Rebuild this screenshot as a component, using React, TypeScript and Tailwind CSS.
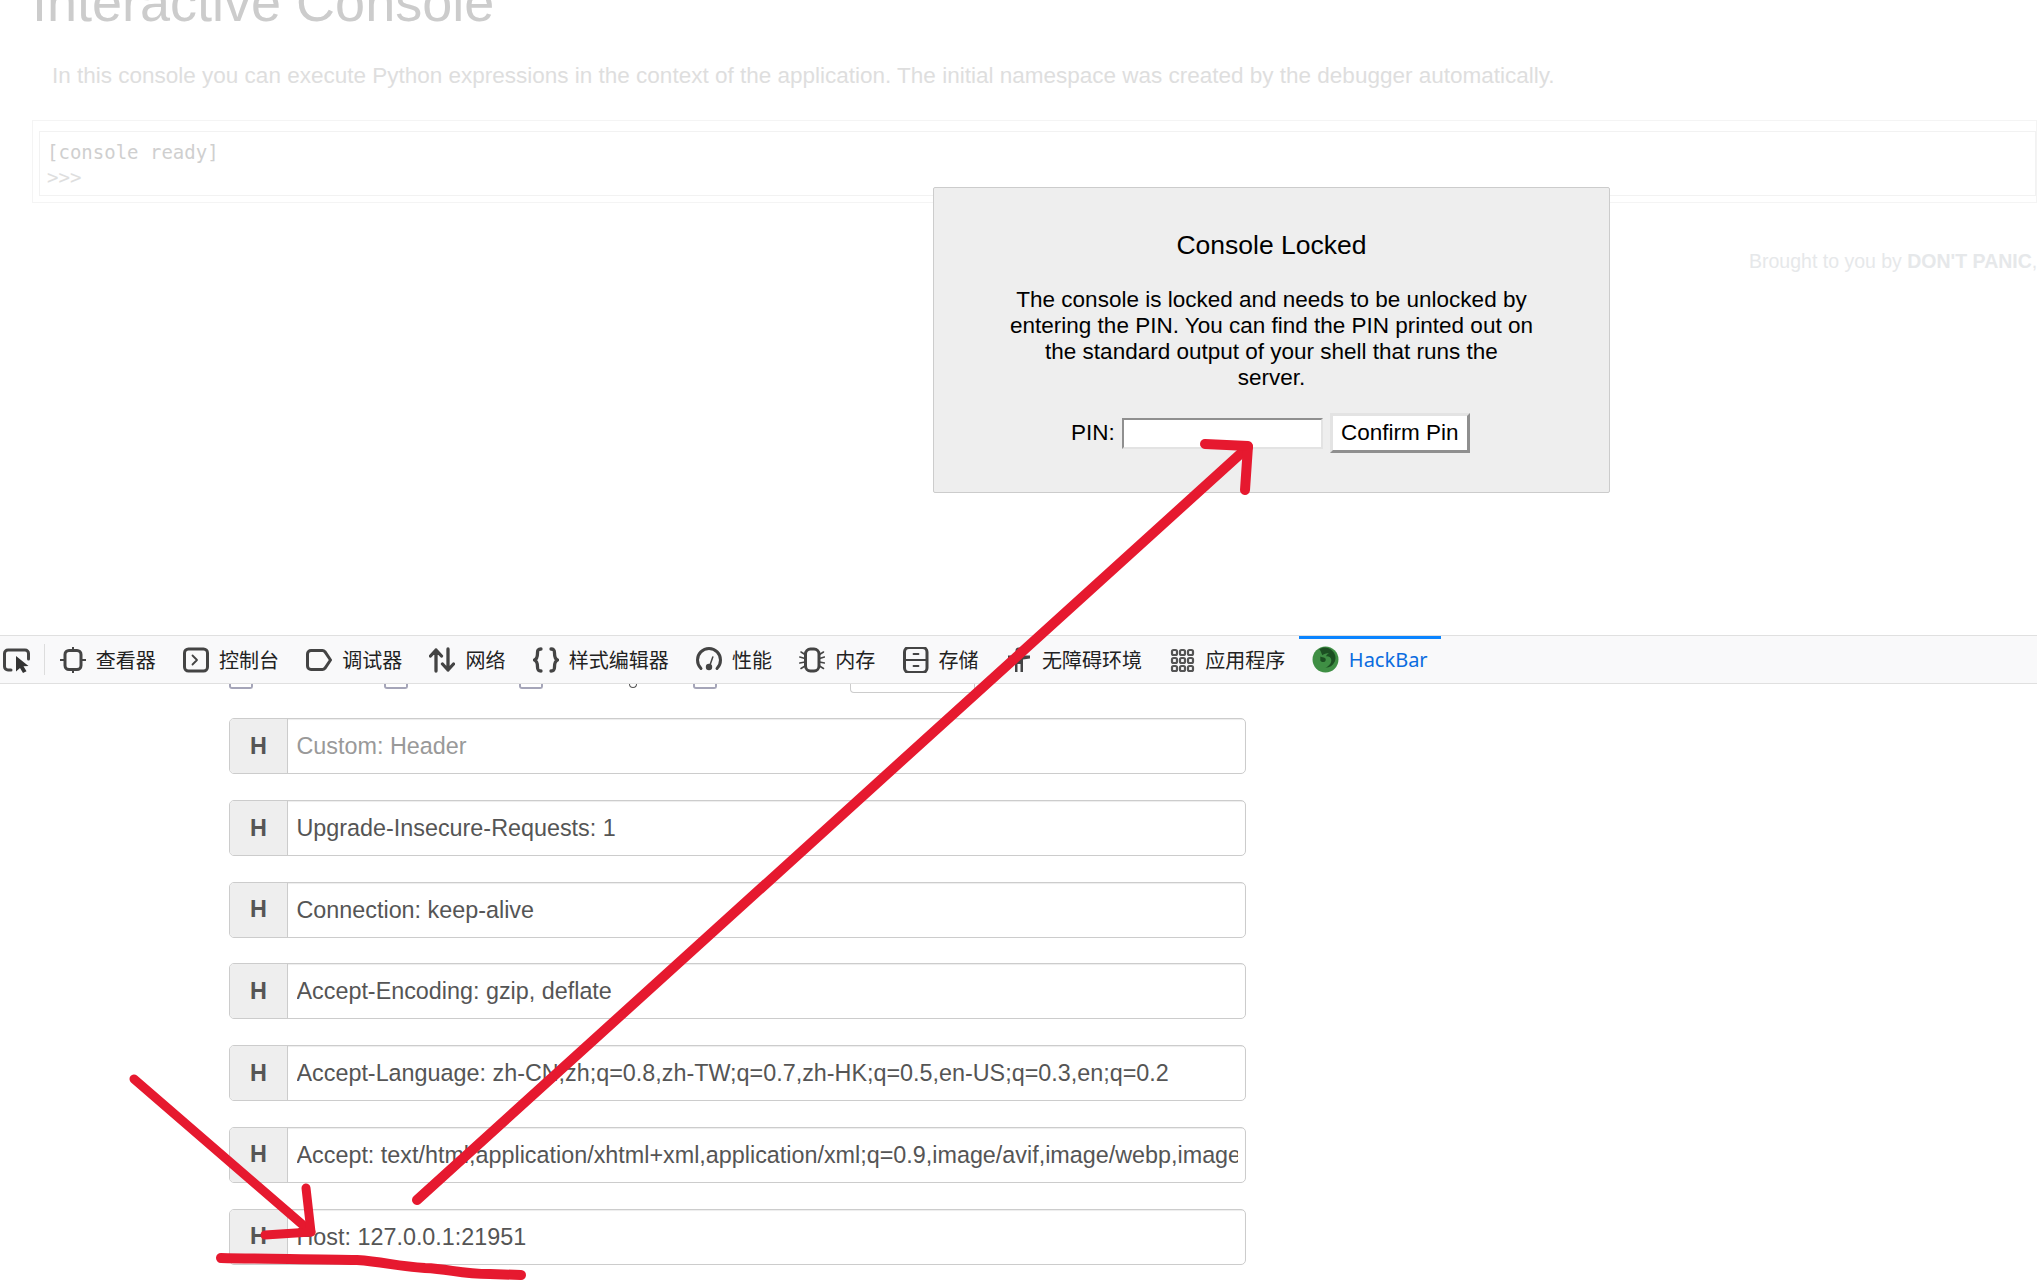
import type { ReactNode } from 'react';

const sans = 'font-["Liberation_Sans",Arial,sans-serif]';

const IconBox = ({ children }: { children: ReactNode }) => (
  <svg viewBox="0 0 26 26" width="26" height="26" fill="none" stroke="#444" strokeWidth="3" strokeLinecap="round" strokeLinejoin="round" className="shrink-0">
    {children}
  </svg>
);

const tabs: { label: string; icon: ReactNode }[] = [
  {
    label: '查看器',
    icon: (
      <IconBox>
        <rect x="5" y="3.500" width="16" height="19" rx="4" />
        <path d="M13 0.500v3M13 22.500v3M0.500 13H5M21 13h4.500" strokeWidth="2" />
      </IconBox>
    ),
  },
  {
    label: '控制台',
    icon: (
      <IconBox>
        <rect x="1.500" y="2" width="23" height="22" rx="4" />
        <path d="M9.500 8.500l4.500 4.500-4.500 4.500" strokeWidth="1.800" />
      </IconBox>
    ),
  },
  {
    label: '调试器',
    icon: (
      <IconBox>
        <path d="M5 3.500h11.500c1 0 1.800.5 2.400 1.200L24.500 13l-5.600 8.300c-.6.7-1.400 1.200-2.400 1.200H5c-2 0-3.500-1.500-3.500-3.500V7c0-2 1.500-3.500 3.500-3.500z" />
      </IconBox>
    ),
  },
  {
    label: '网络',
    icon: (
      <IconBox>
        <path d="M7 24V3M1.500 9L7 3l5.500 6M19 2v21M13.500 17l5.500 6 5.500-6" strokeWidth="3.300" />
      </IconBox>
    ),
  },
  {
    label: '样式编辑器',
    icon: (
      <IconBox>
        <path d="M8 2c-3 0-3.500 1.500-3.500 4 0 4-.5 6-3 7 2.500 1 3 3 3 7 0 2.500.5 4 3.500 4M18 2c3 0 3.500 1.500 3.500 4 0 4 .5 6 3 7-2.500 1-3 3-3 7 0 2.500-.5 4-3.500 4" strokeWidth="3.300" />
      </IconBox>
    ),
  },
  {
    label: '性能',
    icon: (
      <IconBox>
        <path d="M5 21.500C2.800 19.300 1.500 16.300 1.500 13 1.500 6.600 6.600 1.500 13 1.500S24.500 6.600 24.500 13c0 3.300-1.300 6.300-3.500 8.500" />
        <path d="M13.500 19.500L16.800 10" strokeWidth="1.500" />
        <circle cx="13" cy="20" r="3.200" fill="#444" stroke="none" />
      </IconBox>
    ),
  },
  {
    label: '内存',
    icon: (
      <IconBox>
        <rect x="6.500" y="2" width="13.500" height="22" rx="5" />
        <path d="M6 7.500L2 5M6 11.500L0.800 10M6 15L0.800 16M6 19L2 21.500M20.500 7.500L24.500 5M20.500 11.500L25.500 10M20.500 15L25.500 16M20.500 19L24.500 21.500" strokeWidth="1.500" />
      </IconBox>
    ),
  },
  {
    label: '存储',
    icon: (
      <IconBox>
        <rect x="1.500" y="0.500" width="22.500" height="25" rx="4.500" />
        <path d="M2 13h22M10.500 7h5M10.500 19h5" strokeWidth="1.800" />
      </IconBox>
    ),
  },
  {
    label: '无障碍环境',
    icon: (
      <svg viewBox="0 0 26 26" width="26" height="26" fill="#444" className="shrink-0">
        <circle cx="13" cy="4" r="3.500" />
        <path d="M2 8.500h22v3l-7 1V25h-2.500v-8h-3v8H9V12.500l-7-1z" />
      </svg>
    ),
  },
  {
    label: '应用程序',
    icon: (
      <svg viewBox="0 0 26 26" width="26" height="26" fill="none" stroke="#555" strokeWidth="2.200" className="shrink-0">
        <rect x="3" y="3" width="5" height="5" rx="1.500" />
        <rect x="11" y="3" width="5" height="5" rx="1.500" />
        <rect x="19" y="3" width="5" height="5" rx="1.500" />
        <rect x="3" y="11" width="5" height="5" rx="1.500" />
        <rect x="11" y="11" width="5" height="5" rx="1.500" />
        <rect x="19" y="11" width="5" height="5" rx="1.500" />
        <rect x="3" y="19" width="5" height="5" rx="1.500" />
        <rect x="11" y="19" width="5" height="5" rx="1.500" />
        <rect x="19" y="19" width="5" height="5" rx="1.500" />
      </svg>
    ),
  },
];

const headers = [
  { text: 'Custom: Header', placeholder: true },
  { text: 'Upgrade-Insecure-Requests: 1' },
  { text: 'Connection: keep-alive' },
  { text: 'Accept-Encoding: gzip, deflate' },
  { text: 'Accept-Language: zh-CN,zh;q=0.8,zh-TW;q=0.7,zh-HK;q=0.5,en-US;q=0.3,en;q=0.2' },
  { text: 'Accept: text/html,application/xhtml+xml,application/xml;q=0.9,image/avif,image/webp,image/apng,*/*;q=0.8' },
  { text: 'Host: 127.0.0.1:21951' },
];

const HeaderRow = ({ text, placeholder }: { text: string; placeholder?: boolean }) => (
  <div className="flex h-[56px] w-[1017px] overflow-hidden rounded-[5px] border border-[#ccc]">
    <div className="flex w-[58px] shrink-0 items-center justify-center border-r border-[#ccc] bg-[#eee] text-[23.400px] font-bold text-[#555]">H</div>
    <div className={`flex-1 overflow-hidden whitespace-nowrap pl-[8.500px] pr-[7px] text-[23.350px] leading-[55px] shadow-[inset_0_1px_1px_rgba(0,0,0,0.075)] ${placeholder ? 'text-[#999]' : 'text-[#555]'}`}>
      <div className="overflow-hidden">{text}</div>
    </div>
  </div>
);

const Checkbox = () => <div className="h-[5px] w-[24px] rounded-b-[3px] border-x-2 border-b-2 border-[#a5a5b8]" />;

export default function App() {
  return (
    <div className={`relative h-[1282px] w-full overflow-hidden bg-white ${sans}`}>
      {/* Debugger page, dimmed behind the pin prompt */}
      <div className="h-[635px] overflow-hidden">
        <h1 className="mt-[-31px] ml-[32px] text-[54px] leading-[66px] text-[#ccc]">Interactive Console</h1>
        <p className="mt-[26px] ml-[52px] whitespace-nowrap text-[22.500px] leading-[30px] text-[#dedede]">
          In this console you can execute Python expressions in the context of the application. The initial namespace was created by the debugger automatically.
        </p>
        <div className="mt-[29px] ml-[32px] h-[83px] border border-[#f4f4f4] pt-[10px] pl-[6px]">
          <div className="h-[65px] border border-[#f2f2f2] pt-[8px] pl-[7px] font-['DejaVu_Sans_Mono',monospace] text-[19px] leading-[25px] text-[#cfcfcf]">
            <div>[console ready]</div>
            <div className="text-[#dedede]">&gt;&gt;&gt;</div>
          </div>
        </div>
        <p className="mt-[45px] ml-[1749px] whitespace-nowrap text-[19.500px] leading-[26px] text-[#e6e8ea]">
          Brought to you by <b>DON'T PANIC</b>, your friendly Werkzeug powered traceback interpreter.
        </p>
      </div>

      {/* Devtools toolbar */}
      <div className="flex h-[49px] items-stretch border-y border-[#e0e0e0] bg-[#f9f9fa] font-['Noto_Sans_CJK_SC','Noto_Sans',sans-serif] text-[20px] text-[#222]">
        <div className="flex w-[44px] items-center pl-[3px]">
          <svg viewBox="0 0 28 26" width="28" height="26" fill="none" stroke="#444" strokeWidth="3" strokeLinecap="round" strokeLinejoin="round">
            <path d="M8 23H5c-2 0-3.500-1.500-3.500-3.500v-13C1.500 4.500 3 3 5 3h17c2 0 3.500 1.500 3.500 3.500V12" />
            <path d="M13 9l0 15.500 4-3.500 3 5 3.500-1.700-3-5 5-.3z" fill="#333" stroke="none" />
          </svg>
        </div>
        <div className="my-[8px] w-px bg-[#ddd]" />
        <div className="ml-[1px] flex">
          {tabs.map((tab) => (
            <div key={tab.label} className="flex items-center gap-[10px] px-[13.650px]">
              {tab.icon}
              <span>{tab.label}</span>
            </div>
          ))}
          <div className="relative flex items-center gap-[10px] px-[13px] text-[#0a6ce0]">
            <div className="absolute inset-x-0 top-0 h-[3px] bg-[#0a84ff]" />
            <svg viewBox="0 0 26 26" width="27" height="27" className="shrink-0">
              <circle cx="13" cy="13" r="12.500" fill="#3f8f44" />
              <path d="M7 3c4-2.500 9-2 12 1 3.500 3 4.500 7 3 11-2 4-5 6-9 6 4-2 6-5 5.500-8-.5-2.500-3-3.500-5-3 .5-1.500 1.500-2.500 3-3-3-.5-5 .5-6.500 2-1-2-1.500-4-3-6z" fill="#1c4f22" />
              <path d="M8 10c1.500 1 3 .5 4.500 1.500 1 1 1 2.500 0 3.500-1.500 1-3.500.5-4.500-1z" fill="#1c4f22" />
            </svg>
            <span className="font-['Noto_Sans',sans-serif]">HackBar</span>
          </div>
        </div>
      </div>

      {/* HackBar panel */}
      <div className="h-[598px] overflow-hidden">
        <div className="flex h-[9px] items-start pl-[229px]">
          <Checkbox />
          <div className="ml-[131px]"><Checkbox /></div>
          <div className="ml-[111px]"><Checkbox /></div>
          <div className="ml-[86px] h-[4px] w-[8px] rounded-b-full border-x border-b border-[#555]" />
          <div className="ml-[56px]"><Checkbox /></div>
          <div className="ml-[133px] h-[9px] w-[125px] rounded-b-[4px] border-x border-b border-[#ccc]" />
        </div>
        <div className="mt-[25.400px] ml-[229px] flex flex-col gap-[25.700px]">
          {headers.map((h) => (
            <HeaderRow key={h.text} text={h.text} placeholder={h.placeholder} />
          ))}
        </div>
      </div>

      {/* Pin prompt */}
      <div className="absolute top-[187px] left-[933px] h-[306px] w-[677px] rounded-[2px] border border-[#ccc] bg-[#eee] px-[70px] pt-[43px] text-center text-[22.500px] leading-[26px] text-black">
        <div className="text-[26.500px] leading-[28px]">Console Locked</div>
        <p className="mt-[28px]">
          The console is locked and needs to be unlocked by entering the PIN. You can find the PIN printed out on the standard output of your shell that runs the
          <br />
          server.
        </p>
        <div className="mt-[22px] ml-[67px] flex items-center">
          <span>PIN:</span>
          <div className="ml-[7px] h-[31px] w-[201px] border-2 border-t-[#8f8f8f] border-r-[#e3e3e3] border-b-[#e3e3e3] border-l-[#8f8f8f] bg-white" />
          <div className="ml-[7px] flex h-[40px] w-[140px] items-center justify-center border-[3px] border-t-[#e3e3e3] border-r-[#8f8f8f] border-b-[#8f8f8f] border-l-[#e3e3e3] bg-white">Confirm Pin</div>
        </div>
      </div>

      {/* Red annotations drawn on top of the screenshot */}
      <svg className="absolute inset-0" width="2037" height="1282" fill="none" stroke="#e6192f" strokeWidth="9" strokeLinecap="round" strokeLinejoin="round">
        <path d="M417 1200L1248 447" strokeWidth="10" />
        <path d="M1205 444L1248 446L1245 490" strokeWidth="10" />
        <path d="M134 1079L311 1232" />
        <path d="M306 1188L311 1232L265 1235" />
        <path d="M221 1258C260 1259 320 1259 357 1260C385 1262 395 1266 425 1268C450 1269 460 1274 490 1274L521 1275" strokeWidth="10" />
      </svg>
    </div>
  );
}
